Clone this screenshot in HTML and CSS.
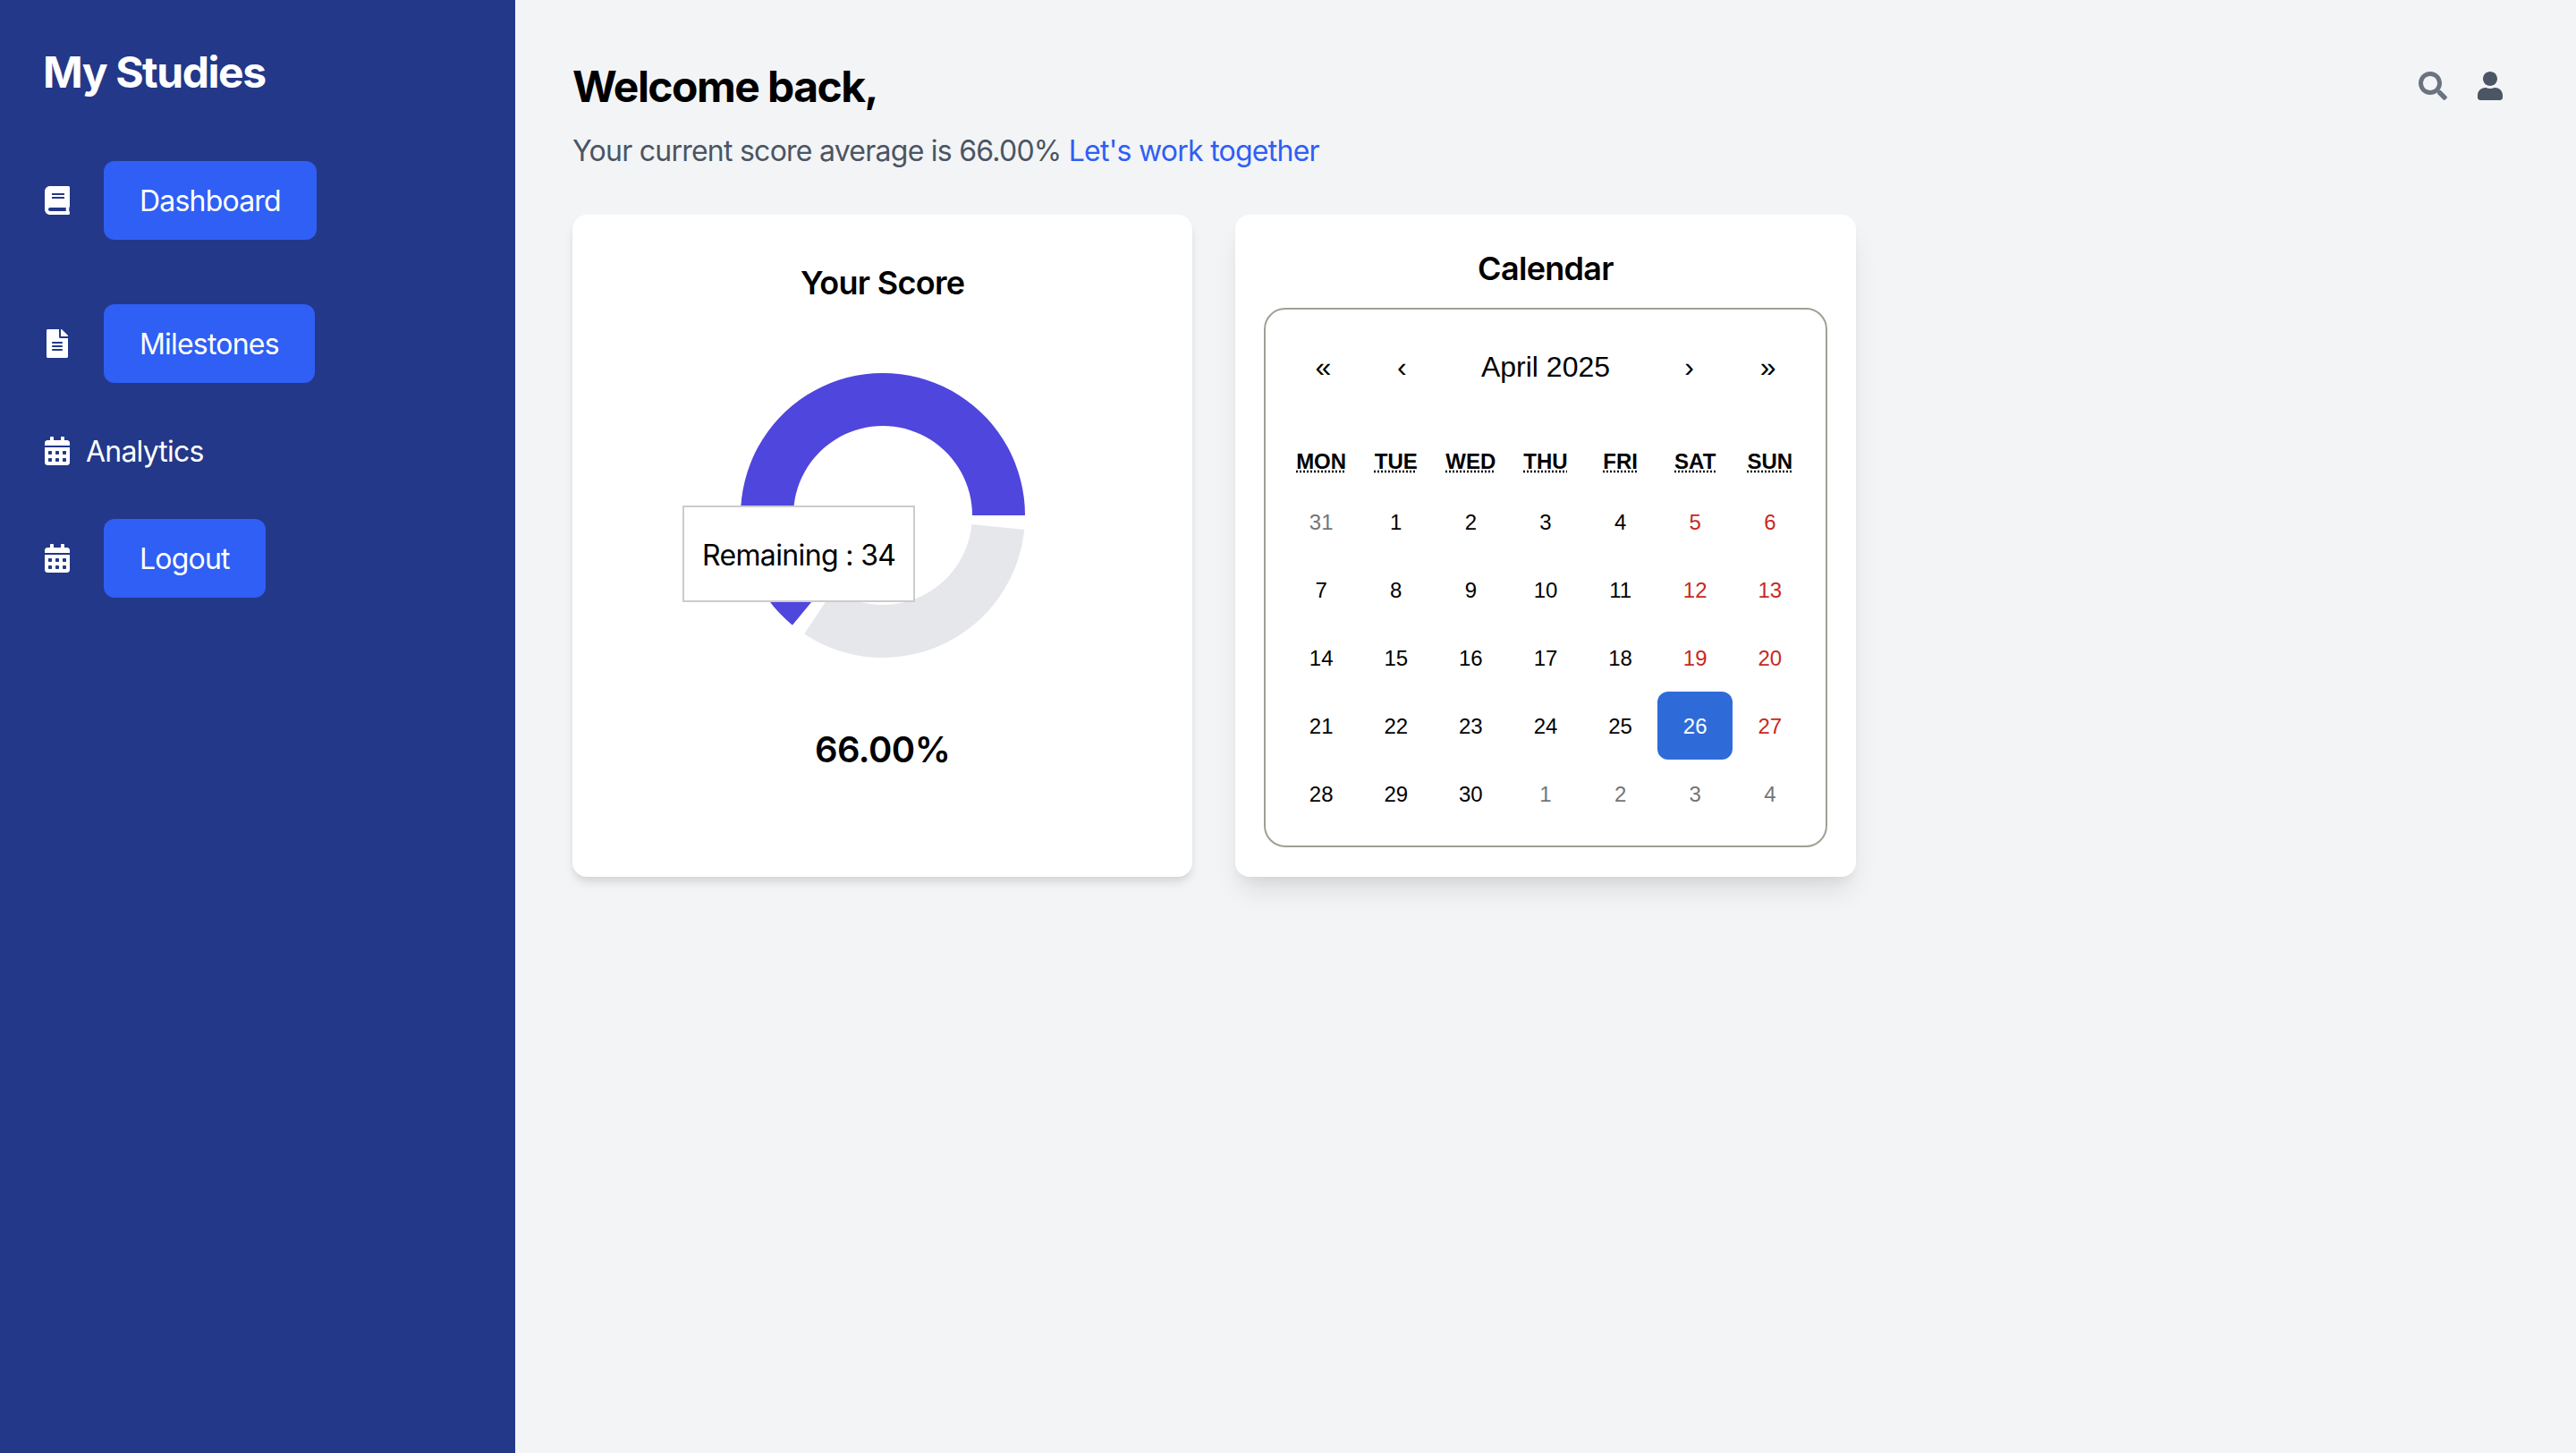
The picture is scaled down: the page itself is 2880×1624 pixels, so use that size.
FILE: index.html
```html
<!DOCTYPE html>
<html lang="en">

<head>
	<title>My Studies</title>
	<meta charset="utf-8">
	<link rel="stylesheet" href="styles.css">
</head>

<body>
	<div class="layout">
		<aside class="sidebar">
			<h1 class="brand">My Studies</h1>
			<nav class="nav">
				<div class="nav-item nav-item-spaced">
					<span class="nav-icon">
						<svg class="icon" viewBox="0 0 448 512"><path d="M448 360V24c0-13.3-10.7-24-24-24H96C43 0 0 43 0 96v320c0 53 43 96 96 96h328c13.3 0 24-10.7 24-24v-16c0-7.5-3.5-14.3-8.9-18.7-4.2-15.4-4.2-59.3 0-74.7 5.4-4.3 8.9-11.1 8.9-18.6zM128 134c0-3.3 2.7-6 6-6h212c3.3 0 6 2.7 6 6v20c0 3.3-2.7 6-6 6H134c-3.3 0-6-2.7-6-6v-20zm0 64c0-3.3 2.7-6 6-6h212c3.3 0 6 2.7 6 6v20c0 3.3-2.7 6-6 6H134c-3.3 0-6-2.7-6-6v-20zm253.4 250H96c-17.7 0-32-14.3-32-32 0-17.6 14.4-32 32-32h285.4c-1.9 17.1-1.9 46.9 0 64z"/></svg>
					</span>
					<a class="nav-button" href="#">Dashboard</a>
				</div>
				<div class="nav-item">
					<span class="nav-icon">
						<svg class="icon" viewBox="0 0 384 512"><path d="M224 136V0H24C10.7 0 0 10.7 0 24v464c0 13.3 10.7 24 24 24h336c13.3 0 24-10.7 24-24V160H248c-13.2 0-24-10.8-24-24zm64 236c0 6.6-5.4 12-12 12H108c-6.6 0-12-5.4-12-12v-8c0-6.6 5.4-12 12-12h168c6.6 0 12 5.4 12 12v8zm0-64c0 6.6-5.4 12-12 12H108c-6.6 0-12-5.4-12-12v-8c0-6.6 5.4-12 12-12h168c6.6 0 12 5.4 12 12v8zm0-72v8c0 6.6-5.4 12-12 12H108c-6.6 0-12-5.4-12-12v-8c0-6.6 5.4-12 12-12h168c6.6 0 12 5.4 12 12zm96-114.1v6.1H256V0h6.1c6.4 0 12.5 2.5 17 7l97.9 98c4.5 4.5 7 10.6 7 16.9z"/></svg>
					</span>
					<a class="nav-button" href="#">Milestones</a>
				</div>
				<div class="nav-item">
					<span class="nav-icon">
						<svg class="icon" viewBox="0 0 448 512"><path d="M0 464c0 26.5 21.5 48 48 48h352c26.5 0 48-21.5 48-48V192H0v272zm320-196c0-6.6 5.4-12 12-12h40c6.6 0 12 5.4 12 12v40c0 6.6-5.4 12-12 12h-40c-6.6 0-12-5.4-12-12v-40zm0 128c0-6.6 5.4-12 12-12h40c6.6 0 12 5.4 12 12v40c0 6.6-5.4 12-12 12h-40c-6.6 0-12-5.4-12-12v-40zM192 268c0-6.6 5.4-12 12-12h40c6.6 0 12 5.4 12 12v40c0 6.6-5.4 12-12 12h-40c-6.6 0-12-5.4-12-12v-40zm0 128c0-6.6 5.4-12 12-12h40c6.6 0 12 5.4 12 12v40c0 6.6-5.4 12-12 12h-40c-6.6 0-12-5.4-12-12v-40zM64 268c0-6.6 5.4-12 12-12h40c6.6 0 12 5.4 12 12v40c0 6.6-5.4 12-12 12H76c-6.6 0-12-5.4-12-12v-40zm0 128c0-6.6 5.4-12 12-12h40c6.6 0 12 5.4 12 12v40c0 6.6-5.4 12-12 12H76c-6.6 0-12-5.4-12-12v-40zM400 64h-48V16c0-8.8-7.2-16-16-16h-32c-8.8 0-16 7.2-16 16v48H160V16c0-8.8-7.2-16-16-16h-32c-8.8 0-16 7.2-16 16v48H48C21.5 64 0 85.5 0 112v48h448v-48c0-26.5-21.5-48-48-48z"/></svg>
					</span>
					<a class="nav-link" href="#">Analytics</a>
				</div>
				<div class="nav-item">
					<span class="nav-icon">
						<svg class="icon" viewBox="0 0 448 512"><path d="M0 464c0 26.5 21.5 48 48 48h352c26.5 0 48-21.5 48-48V192H0v272zm320-196c0-6.6 5.4-12 12-12h40c6.6 0 12 5.4 12 12v40c0 6.6-5.4 12-12 12h-40c-6.6 0-12-5.4-12-12v-40zm0 128c0-6.6 5.4-12 12-12h40c6.6 0 12 5.4 12 12v40c0 6.6-5.4 12-12 12h-40c-6.6 0-12-5.4-12-12v-40zM192 268c0-6.6 5.4-12 12-12h40c6.6 0 12 5.4 12 12v40c0 6.6-5.4 12-12 12h-40c-6.6 0-12-5.4-12-12v-40zm0 128c0-6.6 5.4-12 12-12h40c6.6 0 12 5.4 12 12v40c0 6.6-5.4 12-12 12h-40c-6.6 0-12-5.4-12-12v-40zM64 268c0-6.6 5.4-12 12-12h40c6.6 0 12 5.4 12 12v40c0 6.6-5.4 12-12 12H76c-6.6 0-12-5.4-12-12v-40zm0 128c0-6.6 5.4-12 12-12h40c6.6 0 12 5.4 12 12v40c0 6.6-5.4 12-12 12H76c-6.6 0-12-5.4-12-12v-40zM400 64h-48V16c0-8.8-7.2-16-16-16h-32c-8.8 0-16 7.2-16 16v48H160V16c0-8.8-7.2-16-16-16h-32c-8.8 0-16 7.2-16 16v48H48C21.5 64 0 85.5 0 112v48h448v-48c0-26.5-21.5-48-48-48z"/></svg>
					</span>
					<a class="nav-button" href="#">Logout</a>
				</div>
			</nav>
		</aside>

		<main class="main">
			<header class="topbar">
				<h2 class="welcome">Welcome back,</h2>
				<div class="topbar-icons">
					<svg class="icon icon-search" viewBox="0 0 512 512"><path d="M505 442.7L405.3 343c-4.5-4.5-10.6-7-17-7H372c27.6-35.3 44-79.7 44-128C416 93.1 322.9 0 208 0S0 93.1 0 208s93.1 208 208 208c48.3 0 92.7-16.4 128-44v16.3c0 6.4 2.5 12.5 7 17l99.7 99.7c9.4 9.4 24.6 9.4 33.9 0l28.3-28.3c9.4-9.4 9.4-24.6.1-34zM208 336c-70.7 0-128-57.2-128-128 0-70.7 57.2-128 128-128 70.7 0 128 57.2 128 128 0 70.7-57.2 128-128 128z"/></svg>
					<svg class="icon icon-user" viewBox="0 0 448 512"><path d="M224 256c70.7 0 128-57.3 128-128S294.7 0 224 0 96 57.3 96 128s57.3 128 128 128zm89.6 32h-16.7c-22.2 10.2-46.9 16-72.9 16s-50.6-5.8-72.9-16h-16.7C60.2 288 0 348.2 0 422.4V464c0 26.5 21.5 48 48 48h352c26.5 0 48-21.5 48-48v-41.6c0-74.2-60.2-134.4-134.4-134.4z"/></svg>
				</div>
			</header>
			<p class="summary">Your current score average is 66.00% <a class="summary-link" href="#">Let's work together</a></p>

			<section class="cards">
				<div class="card card-score">
					<h3 class="card-title">Your Score</h3>
					<div class="chart">
						<svg class="donut" width="320" height="320" viewBox="0 0 320 320">
							<path class="slice-done" d="M319 160A159 159 0 1 0 58.9 282.7L96.4 237.2A100 100 0 1 1 260 160Z"/>
							<path class="slice-left" d="M72.2 292.6A159 159 0 0 0 318.2 176.1L259.5 170.1A100 100 0 0 1 104.8 243.4Z"/>
						</svg>
						<div class="chart-tooltip">Remaining : 34</div>
					</div>
					<div class="score-value">66.00%</div>
				</div>

				<div class="card card-calendar">
					<h3 class="card-title">Calendar</h3>
					<div class="calendar">
						<div class="cal-nav">
							<button class="cal-arrow">«</button>
							<button class="cal-arrow">‹</button>
							<button class="cal-label">April 2025</button>
							<button class="cal-arrow">›</button>
							<button class="cal-arrow">»</button>
						</div>
						<div class="cal-weekdays">
							<div><abbr title="Monday">Mon</abbr></div>
							<div><abbr title="Tuesday">Tue</abbr></div>
							<div><abbr title="Wednesday">Wed</abbr></div>
							<div><abbr title="Thursday">Thu</abbr></div>
							<div><abbr title="Friday">Fri</abbr></div>
							<div><abbr title="Saturday">Sat</abbr></div>
							<div><abbr title="Sunday">Sun</abbr></div>
						</div>
						<div class="cal-days">
							<button class="day day-other">31</button>
							<button class="day">1</button>
							<button class="day">2</button>
							<button class="day">3</button>
							<button class="day">4</button>
							<button class="day day-weekend">5</button>
							<button class="day day-weekend">6</button>
							<button class="day">7</button>
							<button class="day">8</button>
							<button class="day">9</button>
							<button class="day">10</button>
							<button class="day">11</button>
							<button class="day day-weekend">12</button>
							<button class="day day-weekend">13</button>
							<button class="day">14</button>
							<button class="day">15</button>
							<button class="day">16</button>
							<button class="day">17</button>
							<button class="day">18</button>
							<button class="day day-weekend">19</button>
							<button class="day day-weekend">20</button>
							<button class="day">21</button>
							<button class="day">22</button>
							<button class="day">23</button>
							<button class="day">24</button>
							<button class="day">25</button>
							<button class="day day-active">26</button>
							<button class="day day-weekend">27</button>
							<button class="day">28</button>
							<button class="day">29</button>
							<button class="day">30</button>
							<button class="day day-other">1</button>
							<button class="day day-other">2</button>
							<button class="day day-other">3</button>
							<button class="day day-other">4</button>
						</div>
					</div>
				</div>
			</section>
		</main>
	</div>
</body>

</html>
```

FILE: styles.css
```css
* {
	box-sizing: border-box;
}

html, body {
	height: 100%;
}

body {
	margin: 0;
	background-color: #f3f4f6;
	color: black;
	font-family: "Inter", "Liberation Sans", sans-serif;
}

h1, h2, h3, p {
	margin: 0;
}

a {
	text-decoration: none;
}

.layout {
	display: flex;
	min-height: 100%;
}

.icon {
	display: block;
	height: 32px;
	fill: currentColor;
}

/* sidebar */
.sidebar {
	width: 576px;
	flex-shrink: 0;
	padding: 48px;
	background-color: #233889;
	color: white;
}

.brand {
	padding-top: 2px;
	font-size: 48px;
	line-height: 62px;
	font-weight: 700;
	letter-spacing: -1.45px;
}

.nav {
	display: flex;
	flex-direction: column;
	gap: 52px;
	margin-top: 68px;
}

.nav-item {
	display: flex;
	align-items: center;
	gap: 16px;
}

.nav-item-spaced {
	margin-bottom: 20px;
}

.nav-icon {
	display: flex;
	justify-content: center;
	width: 32px;
}

.nav-button {
	margin-left: 20px;
	padding: 21px 40px 19px;
	border-radius: 12px;
	background-color: #2f5ff4;
	color: white;
	font-size: 32px;
	line-height: 48px;
	letter-spacing: -0.8px;
}

.nav-link {
	padding-top: 2px;
	color: white;
	font-size: 32px;
	line-height: 46px;
	letter-spacing: -0.8px;
}

/* main area */
.main {
	flex: 1;
	padding: 64px;
}

.topbar {
	display: flex;
	justify-content: space-between;
	align-items: center;
}

.welcome {
	padding-top: 1px;
	font-size: 48px;
	line-height: 63px;
	font-weight: 700;
	letter-spacing: -1.55px;
}

.topbar-icons {
	display: flex;
	gap: 34px;
	padding-right: 18px;
}

.icon-search {
	color: #6b7280;
}

.icon-user {
	color: #4b5563;
}

.summary {
	margin-top: 13px;
	color: #4b5563;
	font-size: 32px;
	line-height: 56px;
	letter-spacing: -0.75px;
}

.summary-link {
	color: #2f5ff4;
}

.cards {
	display: grid;
	grid-template-columns: repeat(3, 1fr);
	gap: 48px;
	margin-top: 43px;
}

.card {
	height: 740px;
	border-radius: 16px;
	background-color: white;
}

.card-title {
	font-size: 36px;
	line-height: 56px;
	font-weight: 600;
	letter-spacing: -0.7px;
	text-align: center;
}

/* score card */
.card-score {
	padding: 48px;
	box-shadow: 0 8px 12px -2px rgba(0, 0, 0, 0.1), 0 4px 8px -2px rgba(0, 0, 0, 0.06);
}

.chart {
	position: relative;
	display: flex;
	align-items: center;
	justify-content: center;
	height: 400px;
	margin-top: 32px;
}

.slice-done {
	fill: #4f46dd;
}

.slice-left {
	fill: #e5e7eb;
}

.chart-tooltip {
	position: absolute;
	left: 75px;
	top: 189px;
	width: 260px;
	padding: 22px 20px 18px;
	border: 2px solid #ccc;
	background-color: white;
	font-size: 32px;
	line-height: 64px;
	letter-spacing: -0.65px;
	white-space: nowrap;
}

.score-value {
	margin-top: 34px;
	font-size: 40px;
	line-height: 56px;
	font-weight: 600;
	letter-spacing: -0.5px;
	text-align: center;
}

/* calendar card */
.card-calendar {
	padding: 32px;
	box-shadow: 0 20px 30px -6px rgba(0, 0, 0, 0.1), 0 8px 12px -4px rgba(0, 0, 0, 0.05);
}

.calendar {
	margin-top: 16px;
	padding: 20px;
	border: 2px solid #a0a096;
	border-radius: 24px;
	background-color: white;
	font-family: "Liberation Sans", Arial, sans-serif;
}

.calendar button {
	border: 0;
	padding: 0;
	background: none;
	color: inherit;
	font-family: inherit;
}

.cal-nav {
	display: flex;
	height: 88px;
	margin-bottom: 32px;
}

.cal-nav button {
	font-size: 32px;
}

.cal-arrow {
	width: 88px;
}

.cal-label {
	flex: 1;
}

.cal-weekdays {
	display: grid;
	grid-template-columns: repeat(7, 1fr);
	padding: 16px 0;
	font-size: 24px;
	line-height: 27px;
	font-weight: 700;
	text-align: center;
	text-transform: uppercase;
}

.cal-weekdays abbr {
	text-decoration: underline dotted;
}

.cal-days {
	display: grid;
	grid-template-columns: repeat(7, 1fr);
	grid-auto-rows: 76px;
}

.calendar .day {
	padding-top: 2px;
	border-radius: 12px;
	font-size: 24px;
}

.calendar .day-other {
	color: #757575;
}

.calendar .day-weekend {
	color: #c9281e;
}

.calendar .day-active {
	background-color: #2f6bd8;
	color: white;
}
```
